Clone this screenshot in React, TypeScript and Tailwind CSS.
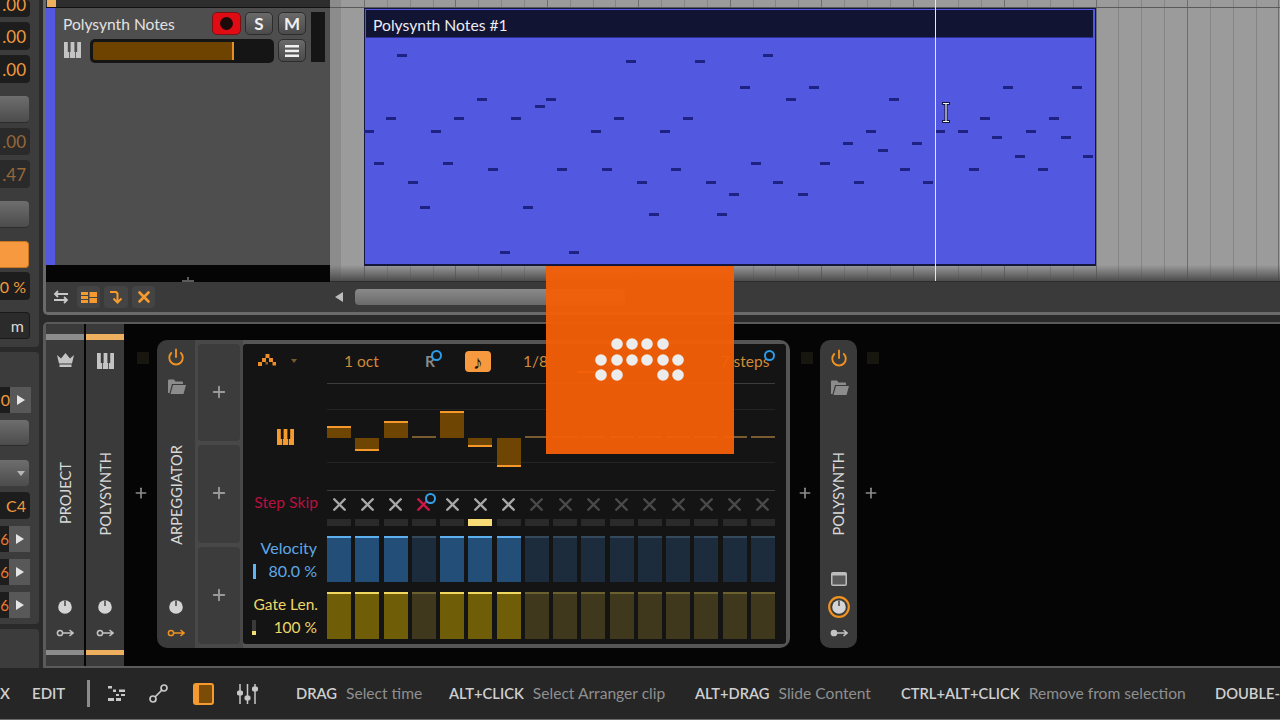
import React from 'react';
import { Plus, Power, X } from 'lucide-react';

const NOTES = [
  [402, 55], [631, 61], [700, 61], [768, 55], [745, 87], [482, 99], [551, 99], [540, 106], [391, 118], [459, 118],
  [516, 118], [619, 118], [688, 118], [369, 131], [436, 131], [596, 131], [665, 131], [379, 163], [448, 163], [493, 169],
  [562, 169], [607, 169], [676, 169], [756, 163], [778, 182], [413, 182], [642, 182], [711, 182], [734, 194], [425, 207],
  [528, 207], [654, 214], [722, 214], [505, 252], [574, 252], [814, 87], [791, 99], [894, 99], [871, 131], [848, 143],
  [917, 143], [883, 150], [825, 163], [905, 169], [859, 182], [928, 182], [803, 194], [1008, 87], [1077, 87], [985, 118],
  [1054, 118], [940, 131], [963, 131], [1031, 131], [997, 137], [1066, 137], [1020, 156], [1088, 156], [974, 169], [1043, 169],
];

const STEPS = Array.from({ length: 16 }, (_, i) => i);
const ACTIVE = [0, 1, 2, 4, 5, 6];
const BARS: Record<number, number> = { 0: 12, 1: -13, 2: 17, 4: 27, 5: -9, 6: -29 };
const GRID = Array.from({ length: 42 }, (_, i) => i);
const LOGO = [
  [617, 344], [632, 344], [647, 344], [663, 344],
  [601, 360], [617, 360], [632, 360], [647, 360], [663, 360], [678, 360],
  [601, 375], [617, 375], [663, 375], [678, 375],
];

function Keys({ className = 'text-[#c4c4c4]' }: { className?: string }) {
  return (
    <svg width="17" height="16" viewBox="0 0 17 16" className={className} fill="currentColor">
      <path d="M0 0H3.800V10H5V16H0Z" />
      <path d="M6.600 0H10.400V10H11.200V16H5.800V10H6.600Z" />
      <path d="M13.200 0H17V16H12V10H13.200Z" />
    </svg>
  );
}

function Crown() {
  return (
    <svg width="17" height="14" viewBox="0 0 17 14" className="text-[#c4c4c4]" fill="currentColor">
      <path d="M0 2l4 3.500L8.500 0 13 5.500 17 2l-2 8.500H2zM2.500 11.500h12V14h-12z" />
    </svg>
  );
}

function Knob({ ring = false }: { ring?: boolean }) {
  return (
    <svg width="22" height="22" viewBox="0 0 22 22">
      {ring && <circle cx="11" cy="11" r="9.800" fill="none" stroke="#ef9220" strokeWidth="2.200" />}
      <circle cx="11" cy="11" r="6.800" fill="#d4d4d4" />
      <rect x="10.300" y="4.500" width="1.400" height="5.500" fill="#3a3a3a" />
    </svg>
  );
}

function KeyArrow({ color = '#c4c4c4', solid = false }: { color?: string; solid?: boolean }) {
  return (
    <svg width="18" height="10" viewBox="0 0 18 10" fill="none" stroke={color} strokeWidth="1.500">
      <circle cx="4" cy="5" r="2.600" fill={solid ? color : 'none'} />
      <path d="M7 5h10M13.500 2l3.500 3-3.500 3" />
    </svg>
  );
}

function Folder() {
  return (
    <svg width="18" height="15" viewBox="0 0 18 15" fill="#8c8c8c">
      <path d="M0 1.500A1 1 0 0 1 1 .500h5l1.500 2H14a1 1 0 0 1 1 1V5H4L1.500 14H0zM5 6h13l-2.500 9H2.500z" />
    </svg>
  );
}

function SideColumn({ label, stripe, icon }: { label: string; stripe: string; icon: React.ReactNode }) {
  return (
    <div className="w-[38px] h-full bg-[#3a3a3a] flex flex-col items-center pt-[10px]">
      <div className={`w-full h-[6px] ${stripe}`} />
      <div className="h-[54px] pt-[13px]">{icon}</div>
      <div className="flex-1 flex items-center justify-center pt-[3px]">
        <span className="[writing-mode:vertical-rl] rotate-180 text-[14.700px] text-[#d8d8d8]">{label}</span>
      </div>
      <div className="h-[60px] flex flex-col items-center">
        <div className="mt-[6px]">
          <Knob />
        </div>
        <div className="mt-[10px]">
          <KeyArrow />
        </div>
      </div>
      <div className={`w-full h-[5px] ${stripe}`} />
      <div className="h-[11px]" />
    </div>
  );
}

function PlusColumn({ width }: { width: string }) {
  return (
    <div className={`${width} flex flex-col items-center pt-[28px] shrink-0`}>
      <div className="w-[12px] h-[12px] bg-[#17160f] ml-1" />
      <Plus size={16} strokeWidth={2.500} className="text-[#8c8c8c] mt-[121px]" />
    </div>
  );
}

function Toggle({ children, className }: { children: React.ReactNode; className?: string }) {
  return (
    <div className={`flex items-center justify-center rounded-[5px] border border-[#2c2c2c] bg-gradient-to-b from-[#6a6a6a] to-[#4a4a4a] text-[#f0f0f0] font-bold text-[17px] ${className}`}>
      {children}
    </div>
  );
}

function SideBox({ text, className, dim = false }: { text: string; className: string; dim?: boolean }) {
  return (
    <div className={`w-[30px] bg-[#1d1d1d] rounded-r-[4px] flex items-center justify-end pr-[4px] pt-[1px] text-[17px] whitespace-nowrap ${dim ? 'text-[#96683a] bg-[#2a2a2a]' : 'text-[#ef9a3c]'} ${className}`}>
      {text}
    </div>
  );
}

function SideButton({ className }: { className: string }) {
  return <div className={`w-[29px] rounded-r-[4px] bg-gradient-to-b from-[#6e6e6e] to-[#4c4c4c] border-b border-[#2c2c2c] ${className}`} />;
}

function ArrowRow({ className }: { className: string }) {
  return (
    <div className={`flex h-[26px] ${className}`}>
      <div className="w-[9px] bg-[#1d1d1d] text-[#ef7a2c] text-[15px] flex items-center justify-end overflow-hidden">6</div>
      <div className="w-[21px] bg-[#585858] flex items-center justify-center">
        <div className="w-0 h-0 border-y-[5px] border-y-transparent border-l-[8px] border-l-[#e4e4e4]" />
      </div>
    </div>
  );
}

function Sidebar() {
  return (
    <div className="w-[43px] shrink-0 h-full bg-[#2a2a2a] overflow-hidden">
      <div className="w-[39px] h-[347px] bg-[#3c3c3c] rounded-br-[4px] flex flex-col">
        <SideBox text=".00" className="h-[17px] items-end" />
        <SideBox text=".00" className="h-[28px] mt-[5px]" />
        <SideBox text=".00" className="h-[28px] mt-[5px]" />
        <SideButton className="h-[27px] mt-[13px]" />
        <SideBox dim text=".00" className="h-[27px] mt-[5px]" />
        <SideBox dim text=".47" className="h-[28px] mt-[5px]" />
        <SideButton className="h-[27px] mt-[13px]" />
        <div className="w-[29px] h-[27px] mt-[13px] rounded-r-[4px] bg-[#f7993e] border border-l-0 border-[#c87622]" />
        <SideBox text="0 %" className="h-[28px] mt-[4px] !text-[16px]" />
        <div className="w-[30px] h-[27px] mt-[12px] bg-[#2b2b2b] rounded-r-[4px] border border-l-0 border-[#1a1a1a] text-[#d8d8d8] text-[16px] flex items-center justify-end pr-[5px]">m</div>
      </div>
      <div className="w-[39px] h-[272px] mt-[5px] bg-[#3c3c3c] rounded-r-[4px] flex flex-col">
        <div className="flex h-[26px] mt-[35px]">
          <div className="w-[10px] bg-[#1d1d1d] text-[#ef9a3c] text-[16px] flex items-center justify-end overflow-hidden">0</div>
          <div className="w-[21px] bg-[#585858] flex items-center justify-center">
            <div className="w-0 h-0 border-y-[5px] border-y-transparent border-l-[8px] border-l-[#e4e4e4]" />
          </div>
        </div>
        <SideButton className="h-[26px] mt-[7px]" />
        <div className="w-[29px] h-[26px] mt-[14px] rounded-r-[4px] bg-gradient-to-b from-[#6e6e6e] to-[#4c4c4c] flex items-center justify-end pr-[4px]">
          <div className="w-0 h-0 border-x-[4px] border-x-transparent border-t-[5px] border-t-[#b8b8b8]" />
        </div>
        <SideBox text="C4" className="h-[27px] mt-[6px] !text-[16px]" />
        <ArrowRow className="mt-[7px]" />
        <ArrowRow className="mt-[7px]" />
        <ArrowRow className="mt-[7px]" />
      </div>
      <div className="w-[39px] h-[39px] mt-[5px] bg-[#3c3c3c] rounded-tr-[4px]" />
    </div>
  );
}

function TrackHeader() {
  return (
    <div className="w-[284px] shrink-0 h-full flex flex-col">
      <div className="h-[8px] flex bg-[#2d2d2d] border-b border-[#111]">
        <div className="w-[9px] ml-[1px] bg-[#eeb05e]" />
      </div>
      <div className="h-[257px] flex">
        <div className="w-[9px] bg-[#5358e0]" />
        <div className="flex-1 bg-[#4e4e4e] flex pl-[8px] pt-[4px]">
          <div className="w-[243px]">
            <div className="flex h-[23px]">
              <div className="w-[149px] text-[15.600px] leading-[24px] text-[#e2e2e2] whitespace-nowrap">Polysynth Notes</div>
              <div className="w-[29px] rounded-[5px] bg-[#e00c14] border border-[#7a1016] flex items-center justify-center">
                <div className="w-[13px] h-[13px] rounded-full bg-[#1c0a0a]" />
              </div>
              <Toggle className="w-[28px] ml-[4px]">S</Toggle>
              <Toggle className="w-[28px] ml-[5px]">M</Toggle>
            </div>
            <div className="flex h-[24px] mt-[4px]">
              <div className="w-[27px] pl-[1px] pt-[3px]">
                <Keys />
              </div>
              <div className="w-[184px] rounded-[5px] bg-[#151515] p-[3px] flex">
                <div className="w-[141px] rounded-l-[2px] bg-[#6e4300] border-r-2 border-[#e88f24]" />
              </div>
              <Toggle className="w-[28px] h-[23px] ml-[4px]">
                <svg width="14" height="12" viewBox="0 0 14 12" fill="#f0f0f0">
                  <rect width="14" height="2.500" />
                  <rect y="4.700" width="14" height="2.500" />
                  <rect y="9.500" width="14" height="2.500" />
                </svg>
              </Toggle>
            </div>
          </div>
          <div className="w-[14px] h-[50px] ml-[5px] bg-[#151515]" />
        </div>
      </div>
      <div className="h-[17px] bg-[#050505] flex justify-center items-end pl-[0px]">
        <div className="w-[12px] h-[5px] border-b-2 border-[#5a5a5a] flex justify-center">
          <div className="w-[2px] bg-[#5a5a5a]" />
        </div>
      </div>
    </div>
  );
}

function Timeline() {
  return (
    <div className="relative flex-1 h-full overflow-hidden bg-[#9b9b9b]">
      <div className="w-[11px] h-full absolute left-0 top-0 bg-[#8c8c8c]" />
      <div className="h-full flex pl-[34px]">
        {GRID.map((i) => (
          <div key={i} className={`w-[22.870px] h-full shrink-0 border-l ${i % 4 === 0 ? 'border-[#6e6e6e]' : 'border-[#858585]'}`} />
        ))}
      </div>
      <div className="absolute left-0 right-0 top-[7px] h-px bg-[#5a5a5a]" />
      <div className="absolute left-0 right-0 top-[265px] h-[16px] bg-gradient-to-b from-transparent to-[#4c4c4c]" />
      <div className="absolute left-0 right-0 top-[281px] h-px bg-[#2c2c2c]" />

      <div className="absolute left-[34px] top-[8px] w-[732px] h-[258px] bg-[#5358e0] border border-[#14163c] border-b-2">
        <div className="mx-[1px] mt-[1px] w-[727px] h-[28px] bg-[#121433] border-b border-[#2a2f9a] text-[15.700px] leading-[31px] text-[#ececf4] pl-[7px]">
          Polysynth Notes #1
        </div>
      </div>
      {NOTES.map(([x, y]) => (
        <div
          key={`${x}-${y}`}
          className="absolute w-[10px] h-[3px] bg-[#1e2282]"
          style={{ left: x - 5 - 330, top: y - 1 }}
        />
      ))}
      <div className="absolute left-[605px] top-0 w-px h-[281px] bg-[#e6e6f0]" />
      <svg className="absolute left-[611px] top-[102px]" width="10" height="21" viewBox="0 0 10 21">
        <path d="M1 1.500h8M1 19.500h8M5 1.500v18" stroke="#14163c" strokeWidth="3.200" fill="none" />
        <path d="M2 1.500h6M2 19.500h6M5 1.500v18" stroke="#f2f2f2" strokeWidth="1.200" fill="none" />
      </svg>
    </div>
  );
}

function ArrangerToolbar() {
  return (
    <div className="h-[30px] bg-[#3a3a3a] flex items-center">
      <svg width="16" height="14" viewBox="0 0 16 14" className="ml-[7px]" fill="none" stroke="#c8c8c8" strokeWidth="1.800">
        <path d="M15 4H2M5 1 2 4l3 3M1 10h13M11 7l3 3-3 3" />
      </svg>
      <div className="w-[23px] h-[22px] ml-[8px] rounded-[4px] bg-[#444] flex items-center justify-center">
        <svg width="16" height="11" viewBox="0 0 16 11" fill="#f59a2e">
          <rect width="7" height="3" />
          <rect y="4" width="7" height="3" />
          <rect y="8" width="7" height="3" />
          <rect x="8.500" width="7.500" height="5" />
          <rect x="8.500" y="6" width="7.500" height="5" />
        </svg>
      </div>
      <div className="w-[24px] h-[22px] ml-[4px] rounded-[4px] bg-[#444] flex items-center justify-center">
        <svg width="13" height="14" viewBox="0 0 13 14" fill="none" stroke="#f59a2e" strokeWidth="2">
          <path d="M0 2h6l1.500 1.500V12M3.500 8.500l4 4 4-4" />
        </svg>
      </div>
      <div className="w-[23px] h-[22px] ml-[4px] rounded-[4px] bg-[#444] flex items-center justify-center">
        <X size={18} strokeWidth={3.500} className="text-[#f59a2e]" />
      </div>
      <div className="w-0 h-0 ml-[180px] border-y-[5px] border-y-transparent border-r-[8px] border-r-[#bcbcbc]" />
      <div className="w-[270px] h-[16px] ml-[12px] rounded-[4px] bg-gradient-to-b from-[#8a8a8a] to-[#6a6a6a]" />
    </div>
  );
}

function StepGrid({ children, className = '' }: { children: React.ReactNode; className?: string }) {
  return <div className={`w-[448px] grid grid-cols-16 gap-x-[4.270px] ${className}`}>{children}</div>;
}

function ArpHeader() {
  return (
    <div className="h-[39px] flex items-center pb-[3px] text-[15.500px] text-[#d08a38] whitespace-nowrap">
      <svg width="18" height="13" viewBox="0 0 18 13" className="ml-[15px] mb-[4px]" fill="#f08c28">
        <rect x="7.500" width="4" height="4" />
        <rect x="4" y="4" width="4" height="4" />
        <rect x="11" y="4" width="4" height="4" />
        <rect y="8" width="4" height="4" />
        <rect x="7.500" y="8" width="2.500" height="2.500" opacity="0.600" />
        <rect x="14.500" y="8" width="3.500" height="3.500" />
      </svg>
      <div className="w-0 h-0 ml-[15px] mb-[3px] border-x-[3.500px] border-x-transparent border-t-[4px] border-t-[#7a5a30]" />
      <span className="ml-[47px] w-[40px]">1 oct</span>
      <div className="relative ml-[41px] w-[12px] text-[#8a8a8a] font-bold">
        R
        <div className="absolute left-[6px] top-0 w-[11px] h-[11px] rounded-full bg-[#141414] border-[2.500px] border-[#2a9ce8]" />
      </div>
      <div className="ml-[28px] w-[26px] h-[21px] mb-[1px] rounded-[4px] bg-[#f7993e] flex items-center justify-center text-[19px] leading-none text-[#1c1206] font-bold">♪</div>
      <span className="ml-[32px] w-[54px]">1/8</span>
      <div className="w-[18px] h-[22px] border-b-2 border-[#f08c28] text-center text-[13px] leading-[18px]">♩</div>
      <span className="ml-[12px] text-[13px]">♪.</span>
      <span className="ml-[18px] text-[13px]">♬</span>
      <div className="relative ml-[73px]">
        7 steps
        <div className="absolute right-[-6px] top-0 w-[11px] h-[11px] rounded-full bg-[#141414] border-[2.500px] border-[#2a9ce8]" />
      </div>
    </div>
  );
}

function PitchRow() {
  return (
    <div className="flex h-[108px]">
      <div className="w-[84px] flex items-center justify-center pl-[1px]">
        <Keys className="text-[#f59a2e]" />
      </div>
      <div className="relative h-full">
        <div className="absolute left-0 right-0 top-0 h-px bg-[#3c3c3c]" />
        <div className="absolute left-0 right-0 top-[26px] h-px bg-[#242424]" />
        <div className="absolute left-0 right-0 top-[79px] h-px bg-[#242424]" />
        <div className="absolute left-0 right-0 bottom-0 h-px bg-[#3c3c3c]" />
        <StepGrid className="relative h-full">
          {STEPS.map((i) => {
            const v = BARS[i] ?? 0;
            return (
              <div key={i} className="h-full flex flex-col">
                <div className="h-[55px] flex flex-col justify-end">
                  {v > 0 && <div className="bg-[#6e4503] border-t-2 border-[#f59a2a]" style={{ height: v }} />}
                  {v === 0 && <div className="h-[2px] bg-[#7a5a30]" />}
                </div>
                {v < 0 && <div className="bg-[#6e4503] border-b-2 border-[#f59a2a]" style={{ height: -v }} />}
              </div>
            );
          })}
        </StepGrid>
      </div>
    </div>
  );
}

function ArpPanel() {
  return (
    <div className="w-[543px] h-[300px] bg-[#141414] rounded-[3px] flex flex-col">
      <ArpHeader />
      <PitchRow />

      <div className="flex h-[27px] items-center">
        <div className="w-[84px] pr-[9px] pb-[3px] text-right text-[15.700px] text-[#b8103f] whitespace-nowrap">Step Skip</div>
        <StepGrid>
          {STEPS.map((i) => (
            <div key={i} className="relative flex justify-center">
              <X size={21} strokeWidth={2.800} className={i === 3 ? 'text-[#cc1848]' : i < 7 ? 'text-[#a8a8a8]' : 'text-[#4a4a4a]'} />
              {i === 3 && <div className="absolute left-[13px] -top-[1px] w-[11px] h-[11px] rounded-full bg-[#141414] border-[2.500px] border-[#35a0ea]" />}
            </div>
          ))}
        </StepGrid>
      </div>
      <div className="flex h-[7px] mt-[1px]">
        <div className="w-[84px]" />
        <StepGrid className="h-full">
          {STEPS.map((i) => (
            <div key={i} className={i === 5 ? 'bg-[#f8dc78]' : 'bg-[#2a2a2a]'} />
          ))}
        </StepGrid>
      </div>

      <div className="flex h-[46px] mt-[10px]">
        <div className="w-[84px] flex flex-col items-end pr-[10px] text-[16px] text-[#5ea8e8] whitespace-nowrap">
          <div className="leading-[24px]">Velocity</div>
          <div className="w-full flex items-center justify-between leading-[22px] pl-[10px]">
            <div className="w-[3px] h-[15px] bg-[#5eb4f4]" />
            <span>80.0 %</span>
          </div>
        </div>
        <StepGrid className="h-full">
          {STEPS.map((i) => (
            <div key={i} className={ACTIVE.includes(i) ? 'bg-[#234e78] border-t-2 border-[#5db0f0]' : 'bg-[#1c2c3c] border-t-2 border-[#35495c]'} />
          ))}
        </StepGrid>
      </div>

      <div className="flex h-[47px] mt-[10px]">
        <div className="w-[84px] flex flex-col items-end pr-[9px] text-[15.500px] text-[#eed668] whitespace-nowrap">
          <div className="leading-[24px]">Gate Len.</div>
          <div className="w-full flex items-center justify-between leading-[22px] pl-[9px] pr-[1px]">
            <div className="w-[4px] h-[15px] bg-[#3a3a3a] flex flex-col justify-end">
              <div className="h-[4px] bg-[#f4dc70]" />
            </div>
            <span>100 %</span>
          </div>
        </div>
        <StepGrid className="h-full">
          {STEPS.map((i) => (
            <div key={i} className={ACTIVE.includes(i) ? 'bg-[#705d08] border-t-2 border-[#f0d860]' : 'bg-[#40381c] border-t-2 border-[#6a6030]'} />
          ))}
        </StepGrid>
      </div>
    </div>
  );
}

function ArpDevice() {
  return (
    <div className="w-[633px] h-[308px] mt-[16px] rounded-[10px] overflow-hidden flex shrink-0">
      <div className="w-[38px] bg-[#3a3a3a] flex flex-col items-center pt-[8px]">
        <Power size={18} strokeWidth={2.500} className="text-[#ef9220]" />
        <div className="mt-[13px] ml-[1px]">
          <Folder />
        </div>
        <div className="flex-1 flex items-center justify-center pt-[3px]">
          <span className="[writing-mode:vertical-rl] rotate-180 text-[14.700px] text-[#d8d8d8]">ARPEGGIATOR</span>
        </div>
        <div className="h-[55px] flex flex-col items-center">
          <div className="mt-[3px]">
            <Knob />
          </div>
          <div className="mt-[10px]">
            <KeyArrow color="#ef9220" />
          </div>
        </div>
      </div>
      <div className="w-[48px] bg-[#484848] flex flex-col gap-[4px] px-[3px] py-[4px]">
        {[0, 1, 2].map((i) => (
          <div key={i} className="flex-1 rounded-[4px] bg-[#3c3c3c] flex items-center justify-center pb-[1px]">
            <Plus size={18} strokeWidth={2.500} className="text-[#9a9a9a]" />
          </div>
        ))}
      </div>
      <div className="flex-1 bg-[#555] pt-[4px] pr-[4px]">
        <ArpPanel />
      </div>
    </div>
  );
}

function SynthDevice() {
  return (
    <div className="w-[37px] h-[308px] mt-[16px] rounded-[10px] bg-[#3a3a3a] flex flex-col items-center pt-[9px] shrink-0">
      <Power size={18} strokeWidth={2.500} className="text-[#ef9220]" />
      <div className="mt-[13px] ml-[3px]">
        <Folder />
      </div>
      <div className="flex-1 flex items-center justify-center pt-[21px]">
        <span className="[writing-mode:vertical-rl] rotate-180 text-[14.700px] text-[#d8d8d8]">POLYSYNTH</span>
      </div>
      <svg width="16" height="14" viewBox="0 0 16 14" className="mb-[10px]">
        <rect width="16" height="14" rx="2" fill="#bdbdbd" />
        <rect x="1.500" y="3.500" width="13" height="9" fill="#5a5a5a" />
      </svg>
      <Knob ring />
      <div className="mt-[10px] mb-[10px]">
        <KeyArrow solid />
      </div>
    </div>
  );
}

function DevicePanel() {
  return (
    <div className="h-[346px] border-l-[3px] border-t-2 border-b-2 border-[#5a5a5a] rounded-tl-[5px] bg-[#050505] flex overflow-hidden">
      <div className="flex h-full shrink-0">
        <SideColumn label="PROJECT" stripe="bg-[#8c8c8c]" icon={<Crown />} />
        <div className="w-[2px] bg-[#050505]" />
        <SideColumn label="POLYSYNTH" stripe="bg-[#eeb05e]" icon={<Keys />} />
      </div>
      <PlusColumn width="w-[33px]" />
      <ArpDevice />
      <PlusColumn width="w-[30px]" />
      <SynthDevice />
      <PlusColumn width="w-[28px]" />
    </div>
  );
}

function Hint({ keys, text, width }: { keys: string; text?: string; width: string }) {
  return (
    <div className={`${width} shrink-0 flex items-baseline gap-[9px] whitespace-nowrap`}>
      <span className="font-semibold text-[14.700px] text-[#cfcfcf]">{keys}</span>
      {text && <span className="text-[15.600px] text-[#8f8f8f]">{text}</span>}
    </div>
  );
}

function Footer() {
  return (
    <div className="h-[52px] bg-[#262626] border-b border-[#6a6a6a] flex items-center text-[15px] text-[#cfcfcf] overflow-hidden whitespace-nowrap">
      <span className="w-[32px] shrink-0 font-semibold">X</span>
      <span className="w-[55px] shrink-0 font-semibold">EDIT</span>
      <div className="w-[3px] h-[27px] shrink-0 bg-[#8c8c8c]" />
      <svg width="17" height="15" viewBox="0 0 17 15" className="ml-[18px] shrink-0" fill="#c8c8c8">
        <rect width="4" height="2.500" />
        <rect x="5" y="3.500" width="3" height="2.500" />
        <rect x="11" y="3.500" width="6" height="2.500" />
        <rect x="8" y="8" width="3" height="2" />
        <rect x="13" y="8" width="4" height="2" />
        <rect y="12" width="6" height="3" />
        <rect x="8" y="12" width="5" height="3" />
      </svg>
      <svg width="19" height="19" viewBox="0 0 19 19" className="ml-[24px] shrink-0" fill="none" stroke="#c8c8c8" strokeWidth="1.700">
        <circle cx="4" cy="15" r="3" />
        <circle cx="15" cy="4" r="3" />
        <path d="M6 13l7-7" />
      </svg>
      <div className="w-[21px] h-[22px] ml-[25px] shrink-0 rounded-[3px] bg-[#7a4c08] border-2 border-[#f59a2e] border-l-[6px]" />
      <svg width="23" height="20" viewBox="0 0 23 20" className="ml-[22px] shrink-0" fill="#c8c8c8" stroke="#c8c8c8">
        <path d="M4 0v20M11.500 0v20M19 0v20" strokeWidth="1.500" />
        <rect x="1.500" y="7" width="5" height="4" rx="1" />
        <rect x="9" y="12" width="5" height="4" rx="1" />
        <rect x="16.500" y="3" width="5" height="4" rx="1" />
      </svg>
      <div className="w-[37px] shrink-0" />
      <Hint keys="DRAG" text="Select time" width="w-[153px]" />
      <Hint keys="ALT+CLICK" text="Select Arranger clip" width="w-[246px]" />
      <Hint keys="ALT+DRAG" text="Slide Content" width="w-[206px]" />
      <Hint keys="CTRL+ALT+CLICK" text="Remove from selection" width="w-[314px]" />
      <Hint keys="DOUBLE-CLICK" width="w-[100px]" />
    </div>
  );
}

export default function App() {
  return (
    <div className="relative w-[1280px] h-[720px] overflow-hidden flex flex-col bg-[#2a2a2a] font-[Lato,sans-serif]">
      <div className="flex h-[668px] shrink-0">
        <Sidebar />
        <div className="flex-1 min-w-0 flex flex-col">
          <div className="h-[315px] shrink-0 border-l-[3px] border-b-[3px] border-[#6a6a6a] rounded-bl-[5px] flex flex-col overflow-hidden">
            <div className="h-[282px] flex">
              <TrackHeader />
              <Timeline />
            </div>
            <ArrangerToolbar />
          </div>
          <div className="h-[7px] shrink-0" />
          <DevicePanel />
        </div>
      </div>
      <Footer />

      <div className="absolute left-[546px] top-[266px] w-[188px] h-[188px] bg-[#f45f08]/96">
        <svg width="188" height="188" viewBox="546 266 188 188" fill="#ececec">
          {LOGO.map(([x, y]) => (
            <circle key={`${x}-${y}`} cx={x} cy={y} r="5.800" />
          ))}
        </svg>
      </div>
    </div>
  );
}
